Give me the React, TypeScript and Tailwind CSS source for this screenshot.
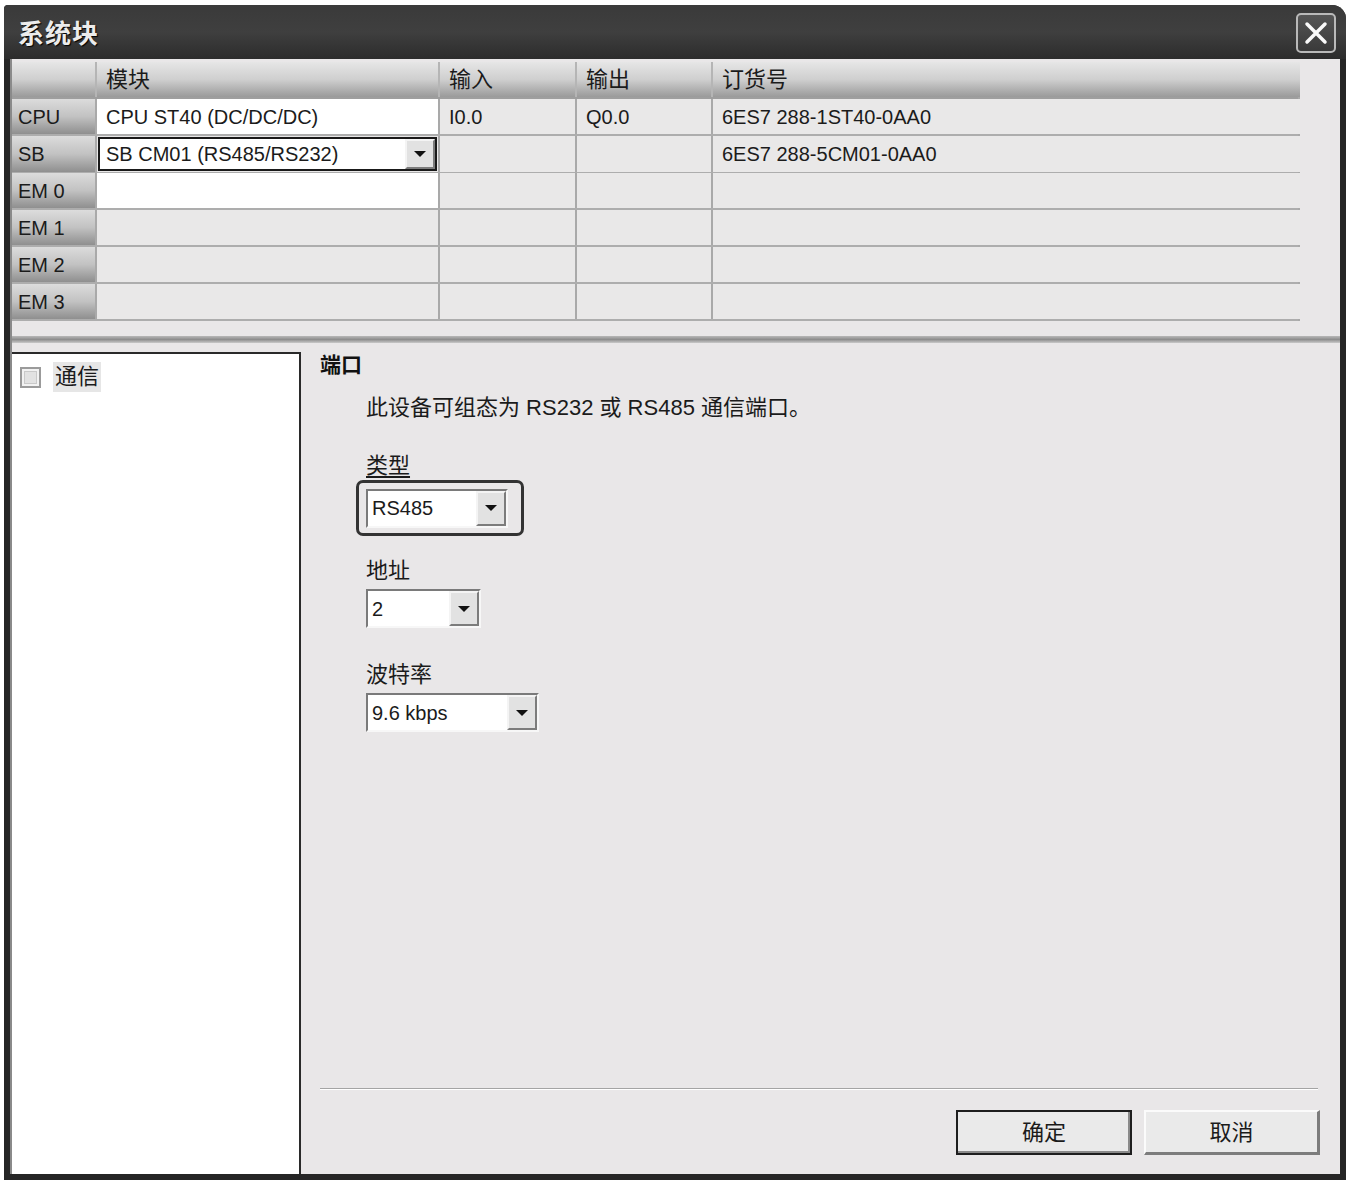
import React from 'react';

const FONT = '"Liberation Sans", "Noto Sans CJK SC", sans-serif';

function Arrow() {
    return (
        <svg width="14" height="8" viewBox="0 0 14 8">
            <polygon points="1,1 13,1 7,7" fill="#111" />
        </svg>
    );
}

function ArrowButton({ w }: { w: number }) {
    return (
        <div
            className="h-full flex items-center justify-center bg-[#e2e2e2] border-t-2 border-l-2 border-t-[#f4f4f4] border-l-[#f4f4f4] border-b-2 border-r-2 border-b-[#7c7c7c] border-r-[#7c7c7c]"
            style={{ width: w }}
        >
            <Arrow />
        </div>
    );
}

function Select({ value, width }: { value: string; width: number }) {
    return (
        <div
            className="h-[39px] flex bg-white border-t-2 border-l-2 border-t-[#7a7a7a] border-l-[#7a7a7a] border-b-2 border-r-2 border-b-[#f7f7f7] border-r-[#f7f7f7]"
            style={{ width }}
        >
            <div className="flex-1 flex items-center pl-[4px] text-[20px] text-[#1b1b1b]">{value}</div>
            <ArrowButton w={30} />
        </div>
    );
}

const cols = ['模块', '输入', '输出', '订货号'];
const rows = [
    { head: 'CPU', cells: ['CPU ST40 (DC/DC/DC)', 'I0.0', 'Q0.0', '6ES7 288-1ST40-0AA0'], white: true },
    { head: 'SB', cells: ['', '', '', '6ES7 288-5CM01-0AA0'], dropdown: true },
    { head: 'EM 0', cells: ['', '', '', ''], white: true },
    { head: 'EM 1', cells: ['', '', '', ''] },
    { head: 'EM 2', cells: ['', '', '', ''] },
    { head: 'EM 3', cells: ['', '', '', ''] },
];

const gridCols = 'grid grid-cols-[85px_343px_137px_136px_587px]';

export default function App() {
    return (
        <div className="w-[1351px] h-[1181px] bg-white overflow-hidden" style={{ fontFamily: FONT }}>
            <div className="ml-[4px] mt-[5px] w-[1342px] h-[1175px] flex flex-col bg-[#262626] rounded-tr-[14px] rounded-tl-[4px]">
                {/* Title bar */}
                <div className="h-[54px] flex items-center justify-between pl-[14px] pr-[10px] rounded-tr-[14px] rounded-tl-[4px] bg-gradient-to-b from-[#3a3a3a] via-[#3f3f3f] to-[#2c2c2c]">
                    <span className="text-[26px] font-bold text-[#ececec] tracking-[1px] mt-[4px]" style={{ textShadow: '1px 1px 1px #000' }}>
                        系统块
                    </span>
                    <div className="w-[40px] h-[40px] mt-[2px] rounded-[5px] border-2 border-[#b9b9b9] bg-gradient-to-b from-[#555] to-[#3a3a3a] flex items-center justify-center">
                        <svg width="26" height="26" viewBox="0 0 26 26">
                            <path d="M4 4 L22 22 M22 4 L4 22" stroke="#fafafa" strokeWidth="3.5" strokeLinecap="round" />
                        </svg>
                    </div>
                </div>

                {/* Body */}
                <div className="flex-1 ml-[6px] mr-[6px] mb-[6px] bg-[#e9e7e8] border-l-2 border-[#8a8a8a] flex flex-col">
                    {/* Table */}
                    <div className="pt-[3px] flex">
                        <div className="w-[1288px] border-r-2 border-[#a9a9a9]">
                            <div className={`${gridCols} h-[37px] border-b-2 border-[#9e9e9e]`}>
                                <div className="bg-gradient-to-b from-[#e6e6e6] via-[#cfcfcf] to-[#9a9a9a] border-r-2 border-[#b5b5b5]" />
                                {cols.map((c) => (
                                    <div
                                        key={c}
                                        className="bg-gradient-to-b from-[#e6e6e6] via-[#cfcfcf] to-[#9a9a9a] border-r-2 border-[#b5b5b5] last:border-r-0 flex items-center pl-[9px] text-[22px] text-[#1b1b1b]"
                                    >
                                        {c}
                                    </div>
                                ))}
                            </div>
                            {rows.map((r) => (
                                <div key={r.head} className={`${gridCols} h-[37px] border-b-2 border-[#adadad]`}>
                                    <div className="bg-gradient-to-b from-[#dcdcdc] via-[#c2c2c2] to-[#8f8f8f] border-r-2 border-[#a9a9a9] flex items-center pl-[6px] text-[20px] text-[#1b1b1b]">
                                        {r.head}
                                    </div>
                                    {r.dropdown ? (
                                        <div className="bg-[#e9e8e8] border-r-2 border-[#a9a9a9] p-[1px]">
                                            <div className="h-full flex bg-white border-2 border-[#1a1a1a]">
                                                <div className="flex-1 flex items-center pl-[6px] text-[20px] text-[#1b1b1b]">SB CM01 (RS485/RS232)</div>
                                                <ArrowButton w={30} />
                                            </div>
                                        </div>
                                    ) : (
                                        <div className={`${r.white ? 'bg-white' : 'bg-[#e9e8e8]'} border-r-2 border-[#a9a9a9] flex items-center pl-[9px] text-[20px] text-[#1b1b1b]`}>
                                            {r.cells[0]}
                                        </div>
                                    )}
                                    {r.cells.slice(1).map((c, i) => (
                                        <div
                                            key={i}
                                            className="bg-[#e9e8e8] border-r-2 border-[#a9a9a9] last:border-r-0 flex items-center pl-[9px] text-[20px] text-[#1b1b1b]"
                                        >
                                            {c}
                                        </div>
                                    ))}
                                </div>
                            ))}
                        </div>
                    </div>

                    {/* Splitter */}
                    <div className="mt-[15px] h-[7px] bg-gradient-to-b from-[#b8b8b8] via-[#8e8e8e] to-[#c9c9c9]" />

                    {/* Lower region */}
                    <div className="flex-1 flex">
                        {/* Tree */}
                        <div className="w-[289px] mt-[9px] bg-white border-t-2 border-r-2 border-[#2a2a2a]">
                            <div className="flex items-center pl-[8px] pt-[8px] gap-[12px]">
                                <div className="w-[21px] h-[21px] border-2 border-[#9b9b9b] bg-[#f2f2f2] p-[2px]">
                                    <div className="w-full h-full border border-[#c9c9c9] bg-[#e2e2e2]" />
                                </div>
                                <span className="bg-[#e6e6e6] px-[2px] text-[22px] leading-[30px] text-[#1b1b1b]">通信</span>
                            </div>
                        </div>

                        {/* Properties */}
                        <div className="flex-1 flex flex-col pl-[19px] pr-[22px] pb-[19px]">
                            <div className="flex-1 pt-[11px]">
                                <div className="text-[21px] font-bold leading-[22px] text-[#111]">端口</div>
                                <div className="ml-[46px] mt-[20px] text-[22px] leading-[24px] text-[#1b1b1b]">
                                    此设备可组态为 RS232 或 RS485 通信端口。
                                </div>
                                <div className="ml-[46px] mt-[34px] text-[22px] leading-[24px] text-[#1b1b1b] underline underline-offset-[3px]">类型</div>
                                <div className="ml-[36px] mt-[2px] w-[168px] h-[56px] rounded-[7px] border-[3px] border-[#333] flex items-center pl-[7px]">
                                    <Select value="RS485" width={142} />
                                </div>
                                <div className="ml-[46px] mt-[23px] text-[22px] leading-[24px] text-[#1b1b1b]">地址</div>
                                <div className="ml-[46px] mt-[6px]">
                                    <Select value="2" width={115} />
                                </div>
                                <div className="ml-[46px] mt-[35px] text-[22px] leading-[24px] text-[#1b1b1b]">波特率</div>
                                <div className="ml-[46px] mt-[6px]">
                                    <Select value="9.6 kbps" width={173} />
                                </div>
                            </div>
                            <div className="h-[2px] bg-[#a4a4a4] border-b border-white" />
                            <div className="mt-[20px] flex justify-end gap-[12px] -mr-[2px]">
                                <button className="w-[176px] h-[45px] bg-[#eaeaea] border-2 border-[#1e1e1e] text-[22px] text-[#1b1b1b] shadow-[inset_-2px_-2px_0_#8a8a8a]">
                                    确定
                                </button>
                                <button className="w-[176px] h-[45px] bg-[#eaeaea] border-t-2 border-l-2 border-t-[#fbfbfb] border-l-[#fbfbfb] border-b-[3px] border-r-[3px] border-b-[#7c7c7c] border-r-[#7c7c7c] text-[22px] text-[#1b1b1b]">
                                    取消
                                </button>
                            </div>
                        </div>
                    </div>
                </div>
            </div>
        </div>
    );
}
